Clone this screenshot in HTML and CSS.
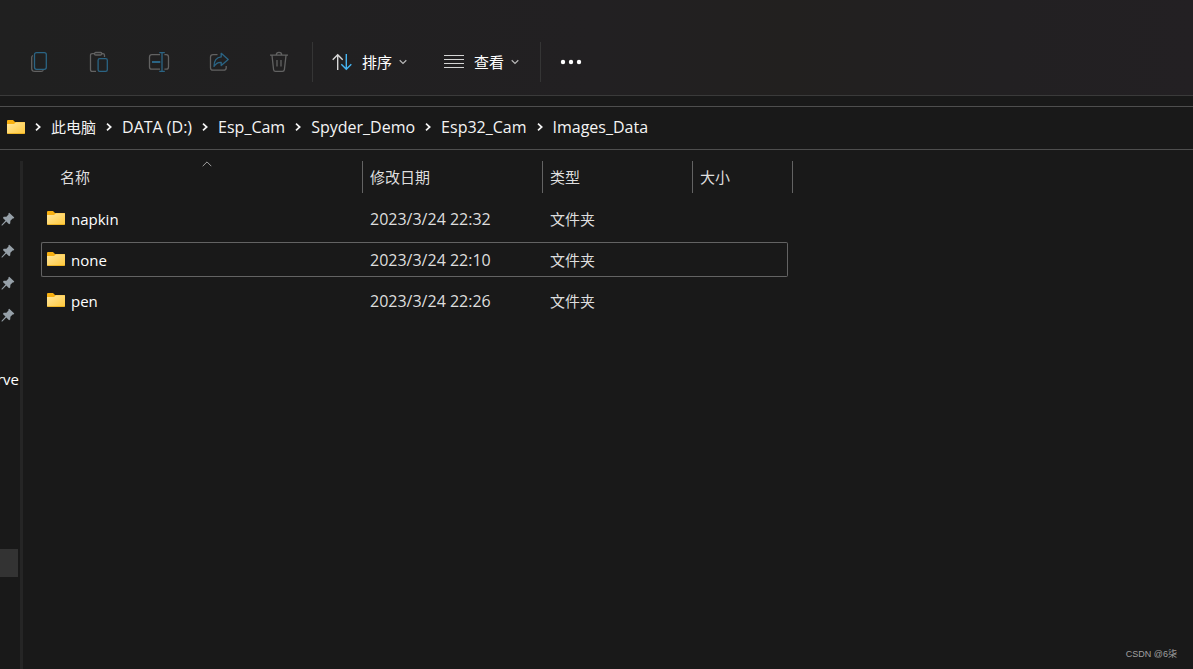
FILE: index.html
```html
<!DOCTYPE html>
<html lang="zh-CN">
<head>
<meta charset="utf-8">
<meta name="viewport" content="width=device-width, initial-scale=1">
<title>Images_Data</title>
<link rel="stylesheet" href="styles.css">
</head>
<body>
<svg class="defs" width="0" height="0" aria-hidden="true">
  <defs>
    <linearGradient id="folder-fill" x1="0" y1="0" x2="1" y2="1">
      <stop offset="0" stop-color="#ffe7a0"/>
      <stop offset="1" stop-color="#ffc83a"/>
    </linearGradient>
    <symbol id="folder" viewBox="0 0 18 14">
      <path d="M0 1a1 1 0 0 1 1-1h5l2 2h9a1 1 0 0 1 1 1v6H0z" fill="#f8b010"/>
      <path d="M0 4h7l2-1.8h9V13a1 1 0 0 1-1 1H1a1 1 0 0 1-1-1z" fill="url(#folder-fill)"/>
      <path d="M.5 13.6h17" stroke="#e9a915" stroke-width=".8"/>
    </symbol>
    <symbol id="pin" viewBox="0 0 14 14">
      <path d="M8.2.8 13.3 5.6 12.4 6.6 11.6 6.4 9.4 8.7 9.2 11.6 8.1 12.3 5.3 9.4 1.3 13.4.5 13.5.6 12.7 4.5 8.6 1.9 5.9 2.7 4.8 5.4 4.7 7.5 2.5 7.4 1.5z" fill="#96a0a8"/>
    </symbol>
    <symbol id="crumb-arrow" viewBox="0 0 6 8">
      <path d="M1 .7 4.700 4 1 7.300" fill="none" stroke="#f4f4f4" stroke-width="1.700"/>
    </symbol>
    <symbol id="drop-arrow" viewBox="0 0 8 6">
      <path d="M.7 1.300 4 4.500 7.300 1.300" fill="none" stroke="#b8b8b8" stroke-width="1.200"/>
    </symbol>
  </defs>
</svg>

<header class="toolbar">
  <button class="tool" type="button" aria-label="复制">
    <svg width="22" height="22" viewBox="0 0 22 22" fill="none" stroke-width="1.3">
      <path class="dim" d="M4.900 4.500Q3.700 5 3.700 6.500v10.700Q3.700 20.400 6.900 20.400h6.300q1.600 0 2.200-1.100"/>
      <rect class="blue" x="6.500" y="1.600" width="11.800" height="16.700" rx="2"/>
    </svg>
  </button>
  <button class="tool" type="button" aria-label="粘贴">
    <svg width="22" height="22" viewBox="0 0 22 22" fill="none" stroke-width="1.3">
      <path class="dim" d="M8 20.4H4.2q-1.7 0-1.7-1.7V4.3q0-1.7 1.7-1.7h2.2M13.8 2.6h1q1.7 0 1.7 1.7V6"/>
      <rect class="dim" x="6.5" y="1.5" width="7.3" height="2.5" rx="1.2"/>
      <rect class="blue" x="10.1" y="7.7" width="9.2" height="12.7" rx="1.6"/>
    </svg>
  </button>
  <button class="tool" type="button" aria-label="重命名">
    <svg width="22" height="22" viewBox="0 0 22 22" fill="none" stroke-width="1.3">
      <path class="dim" d="M12 3.6H3.8Q1.5 3.6 1.5 5.9v10q0 2.3 2.3 2.3H12M16.4 3.6h1.8q2.3 0 2.3 2.3v10q0 2.3-2.3 2.3h-1.8"/>
      <path class="blue" d="M11.3 1.6h5.5M11.3 20.4h5.5M14 1.6v18.8"/>
      <path class="blue" d="M4 11h8.3" stroke-width="2"/>
    </svg>
  </button>
  <button class="tool" type="button" aria-label="共享">
    <svg width="22" height="22" viewBox="0 0 22 22" fill="none" stroke-width="1.3">
      <path class="dim" d="M9.5 3.6H5Q2.5 3.6 2.5 6v10.7q0 2.5 2.5 2.5h10.6q2.6 0 2.6-2.5V15"/>
      <path class="blue" stroke-linejoin="round" d="M13.2 2.3 20.2 8.6 13.2 14.6V11.3Q8.6 11 6 15.4 6 6.600 13.2 5.900z"/>
    </svg>
  </button>
  <button class="tool" type="button" aria-label="删除">
    <svg width="22" height="22" viewBox="0 0 22 22" fill="none" stroke-width="1.3">
      <path class="dim" d="M2 4.2h18M8.300 4q0-2.600 2.700-2.600T13.700 4M4 4.500l1.600 14.200q.2 1.700 1.900 1.700h7q1.700 0 1.900-1.700L18 4.500M9 9v6.500M13 9v6.500"/>
    </svg>
  </button>
  <span class="rule"></span>
  <button class="menu" type="button">
    <svg width="20" height="18" viewBox="0 0 20 18" fill="none" stroke-width="1.4">
      <path d="M5.700 17V2M.7 6.700 5.700 1.700l5 5" stroke="#d8d8d8"/>
      <path d="M14.300 1v15M9.300 11.300l5 5 5-5" stroke="#45b5f2"/>
    </svg>
    <span>排序</span>
    <svg width="8" height="6"><use href="#drop-arrow"/></svg>
  </button>
  <button class="menu" type="button">
    <svg width="20" height="14" viewBox="0 0 20 14" fill="none" stroke="#d4d4d4">
      <path d="M0 .5h20M0 4.500h20M0 8.500h20M0 12.500h20"/>
    </svg>
    <span>查看</span>
    <svg width="8" height="6"><use href="#drop-arrow"/></svg>
  </button>
  <span class="rule"></span>
  <button class="tool" type="button" aria-label="更多">
    <svg width="22" height="6" viewBox="0 0 22 6" fill="#fff">
      <circle cx="3" cy="3" r="2.200"/><circle cx="11" cy="3" r="2.200"/><circle cx="19" cy="3" r="2.200"/>
    </svg>
  </button>
</header>

<nav class="address" aria-label="路径">
  <svg width="18" height="14"><use href="#folder"/></svg>
  <svg class="arrow" width="6" height="8"><use href="#crumb-arrow"/></svg>
  <a class="crumb crumb-root" href="#">此电脑</a>
  <svg class="arrow" width="6" height="8"><use href="#crumb-arrow"/></svg>
  <a class="crumb" href="#">DATA (D:)</a>
  <svg class="arrow" width="6" height="8"><use href="#crumb-arrow"/></svg>
  <a class="crumb" href="#">Esp_Cam</a>
  <svg class="arrow" width="6" height="8"><use href="#crumb-arrow"/></svg>
  <a class="crumb" href="#">Spyder_Demo</a>
  <svg class="arrow" width="6" height="8"><use href="#crumb-arrow"/></svg>
  <a class="crumb" href="#">Esp32_Cam</a>
  <svg class="arrow" width="6" height="8"><use href="#crumb-arrow"/></svg>
  <a class="crumb" href="#">Images_Data</a>
</nav>

<div class="body">
  <aside class="side">
    <ul class="side-list">
      <li class="side-item"><svg width="14" height="14"><use href="#pin"/></svg></li>
      <li class="side-item"><svg width="14" height="14"><use href="#pin"/></svg></li>
      <li class="side-item"><svg width="14" height="14"><use href="#pin"/></svg></li>
      <li class="side-item"><svg width="14" height="14"><use href="#pin"/></svg></li>
      <li class="side-item side-label">rve</li>
      <li class="side-current"></li>
    </ul>
  </aside>
  <main class="files">
    <table class="list">
      <colgroup><col class="col-name"><col class="col-date"><col class="col-type"><col class="col-size"></colgroup>
      <thead>
        <tr>
          <th scope="col" class="sorted"><div class="head">名称</div>
            <svg class="sort-mark" width="10" height="6" viewBox="0 0 10 6" fill="none" stroke="#a0a0a0"><path d="M.7 5.200 5 .9l4.300 4.300"/></svg></th>
          <th scope="col"><div class="head">修改日期</div></th>
          <th scope="col"><div class="head">类型</div></th>
          <th scope="col"><div class="head head-last">大小</div></th>
        </tr>
      </thead>
      <tbody>
        <tr><td><div class="name"><svg width="18" height="14"><use href="#folder"/></svg>napkin</div></td><td class="date">2023/3/24 22:32</td><td>文件夹</td><td></td></tr>
        <tr class="focused"><td><div class="name"><svg width="18" height="14"><use href="#folder"/></svg>none</div></td><td class="date">2023/3/24 22:10</td><td>文件夹</td><td></td></tr>
        <tr><td><div class="name"><svg width="18" height="14"><use href="#folder"/></svg>pen</div></td><td class="date">2023/3/24 22:26</td><td>文件夹</td><td></td></tr>
      </tbody>
    </table>
  </main>
</div>
<div class="watermark">CSDN @6柒</div>
</body>
</html>
```

FILE: styles.css
```css
* { box-sizing: border-box; }

body {
  margin: 0;
  min-height: 100vh;
  display: flex;
  flex-direction: column;
  position: relative;
  background: #191919;
  color: #fff;
  font: 15px/20px "Open Sans", "Noto Sans CJK SC", sans-serif;
}

svg { display: block; flex: none; }
.defs { position: absolute; }

button {
  border: 0;
  background: none;
  color: inherit;
  font: inherit;
}

.toolbar {
  display: flex;
  align-items: center;
  padding: 32px 9px 3px;
  border-bottom: 1px solid #3a3a3a;
  background: linear-gradient(90deg, #202020, #222022 50%, #22201f 66%, #222022 84%, #232023);
}

.tool {
  display: grid;
  place-items: center;
  width: 60px;
  height: 60px;
  padding: 0;
}

.dim { stroke: #626262; }
.blue { stroke: #2b6484; }

.rule {
  width: 1px;
  height: 40px;
  margin-left: 3px;
  background: #353535;
}

.menu {
  display: flex;
  align-items: center;
  gap: 10px;
  height: 60px;
  padding: 0 18px 0 19px;
}

.menu svg:last-child { margin-left: -3px; }

.address {
  display: flex;
  align-items: center;
  height: 44px;
  margin-top: 10px;
  padding: 0 0 2px 7px;
  border: solid #4e4e4e;
  border-width: 1px 0;
}

.arrow { margin: 0 10px; }

.crumb {
  color: #f4f4f4;
  font-size: 16px;
  text-decoration: none;
}

.crumb-root { font-size: 15px; }

.body {
  flex: 1;
  display: flex;
}

.side {
  width: 23px;
  margin-top: 11px;
  padding-top: 42px;
  border-right: 3px solid #252525;
}

.side-list {
  margin: 0;
  padding: 0;
  list-style: none;
}

.side-item {
  display: flex;
  align-items: center;
  height: 32px;
  padding-left: 1px;
}

.side-label {
  justify-content: flex-end;
  width: 19px;
  margin-top: 32px;
  padding: 0;
  overflow: hidden;
}

.side-current {
  width: 18px;
  height: 28px;
  margin-top: 154px;
  background: #333;
}

.files { padding: 5px 0 0 18px; }

.list {
  width: 747px;
  table-layout: fixed;
  border-collapse: separate;
  border-spacing: 0 6px;
}

.col-name { width: 322px; }
.col-date { width: 180px; }
.col-type { width: 150px; }

th {
  height: 34px;
  padding: 0;
  color: #dedede;
  font-weight: 400;
  text-align: left;
  vertical-align: top;
}

.head {
  height: 32px;
  padding: 6px 0 0 7px;
  border-right: 1px solid #636363;
}

.head-last { margin-right: -5px; }
.sorted { position: relative; }
.sorted .head { padding-left: 19px; }

.sort-mark {
  position: absolute;
  top: 0;
  left: 50%;
}

td {
  height: 35px;
  padding: 0 0 0 7px;
  border: solid transparent;
  border-width: 1px 0;
  color: #dedede;
}

td:first-child { padding-left: 5px; border-left-width: 1px; }
td:last-child { border-right-width: 1px; }
.date { font-size: 16px; }
.focused td { border-color: #636363; }
.focused td:first-child { border-radius: 2px 0 0 2px; }
.focused td:last-child { border-radius: 0 2px 2px 0; }

.name {
  display: flex;
  align-items: center;
  gap: 6px;
  color: #fff;
}

.name svg { margin-bottom: 2px; }

.watermark {
  position: absolute;
  right: 16px;
  bottom: 8px;
  color: #a0a0a0;
  font: 9px/14px "Liberation Sans", "Noto Sans CJK SC", sans-serif;
}
```
